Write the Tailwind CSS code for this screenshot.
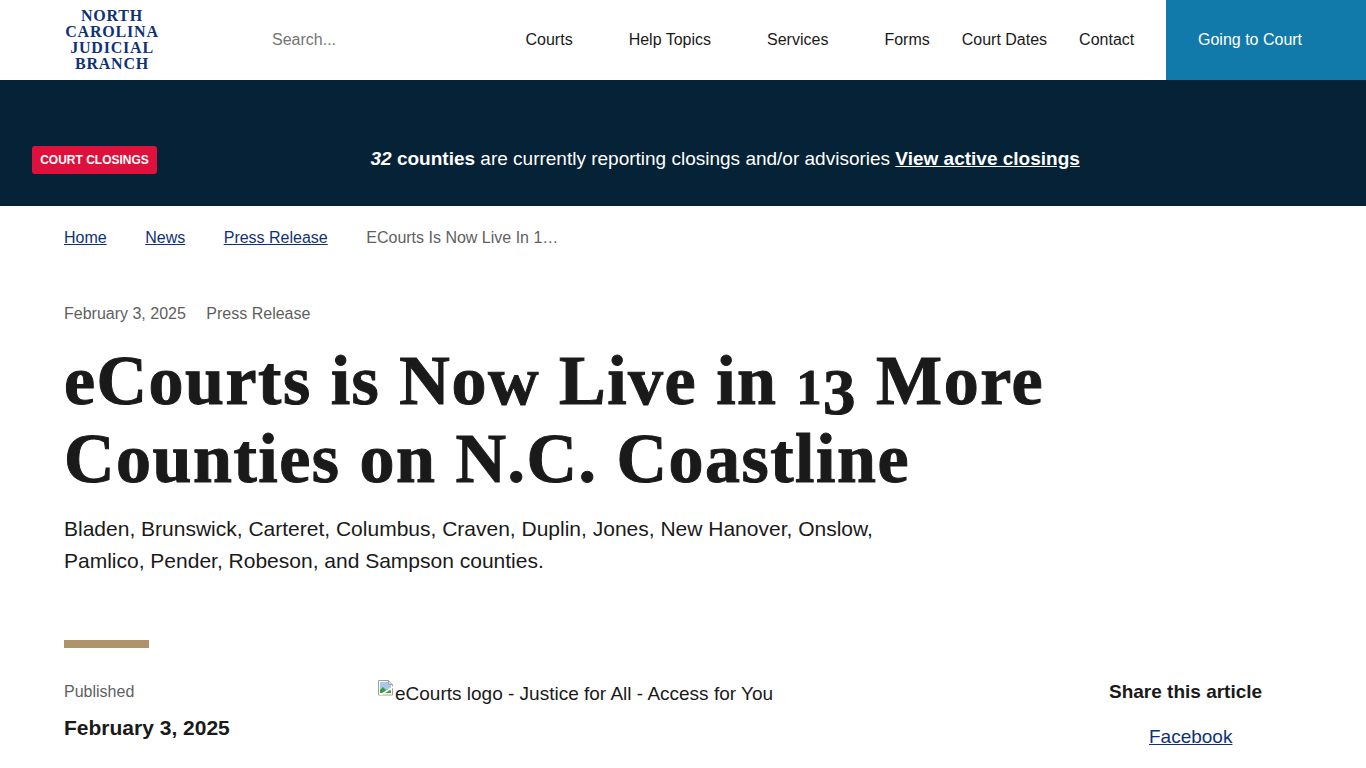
<!DOCTYPE html>
<html lang="en">
<head>
    <meta charset="UTF-8">
    <meta name="viewport" content="width=device-width, initial-scale=1.0">
    <title>eCourts is Now Live in 13 More Counties on N.C. Coastline</title>
    <script src="https://cdn.jsdelivr.net/npm/@tailwindcss/browser@4"></script>
</head>
<body class="bg-white font-['Liberation_Sans',Arial,sans-serif] text-[#1a1a1a] overflow-x-hidden">
    <!-- top nav -->
    <header class="flex h-20 items-stretch bg-white">
        <a href="#" class="w-[224px] pt-2 text-center font-['Liberation_Serif',serif] text-[16px] leading-[16px] font-bold tracking-[0.8px] text-[#0f3277]">
            <span class="block">NORTH</span>
            <span class="block">CAROLINA</span>
            <span class="block">JUDICIAL</span>
            <span class="block">BRANCH</span>
        </a>
        <div class="flex w-[222px] items-center pl-12 text-[16px] text-[#757575]">Search...</div>
        <nav class="ml-[63.5px] flex items-center text-[16px] text-[#1a1a1a]">
            <a href="#" class="pr-10 pl-4">Courts</a>
            <a href="#" class="pr-10 pl-4">Help Topics</a>
            <a href="#" class="pr-10 pl-4">Services</a>
            <a href="#" class="px-4">Forms</a>
            <a href="#" class="px-4">Court Dates</a>
            <a href="#" class="px-4">Contact</a>
        </nav>
        <a href="#" class="ml-auto flex w-[200px] items-center bg-[#1279ab] pl-8 text-[16px] text-white">Going to Court</a>
    </header>

    <!-- closings banner -->
    <div class="flex h-[126px] items-center bg-[#052236] pt-[34px] pl-8 text-white">
        <span class="flex h-7 w-[125px] items-center justify-center rounded-[3px] bg-[#e0103c] text-[12px] font-bold">COURT CLOSINGS</span>
        <p class="mb-[2px] ml-[213.5px] text-[19px]"><strong><em>32</em> counties</strong> are currently reporting closings and/or advisories <a href="#" class="font-bold underline">View active closings</a></p>
    </div>

    <main class="px-16">
        <!-- breadcrumb -->
        <nav class="flex h-[64px] items-center text-[16px]">
            <a href="#" class="text-[#0f3277] underline">Home</a>
            <a href="#" class="ml-[38.5px] text-[#0f3277] underline">News</a>
            <a href="#" class="ml-[38.5px] text-[#0f3277] underline">Press Release</a>
            <span class="ml-[38.5px] text-[#5f5f5f]">ECourts Is Now Live In 1…</span>
        </nav>

        <div class="mt-[32px] flex gap-[20.5px] text-[16px] leading-6 text-[#5f5f5f]">
            <span>February 3, 2025</span>
            <span>Press Release</span>
        </div>

        <h1 class="mt-[16px] font-['Liberation_Serif',serif] text-[70px] leading-[78px] font-bold tracking-[1.5px] text-[#1a1a1a] [-webkit-text-stroke:1px_#1a1a1a]">
            <span class="block">eCourts is Now Live in <span class="text-[50px] leading-[0]">1</span><span class="align-[-10px] text-[65px] leading-[0]">3</span> More</span>
            <span class="block">Counties on N.C. Coastline</span>
        </h1>

        <p class="mt-[15px] max-w-[860px] text-[21px] leading-8 text-[#1a1a1a]">Bladen, Brunswick, Carteret, Columbus, Craven, Duplin, Jones, New Hanover, Onslow, Pamlico, Pender, Robeson, and Sampson counties.</p>

        <div class="mt-[63px] h-2 w-[85px] bg-[#ae9468]"></div>

        <!-- article row -->
        <div class="mt-[32px] flex items-start">
            <div class="w-[314px]">
                <div class="text-[16px] leading-6 text-[#5f5f5f]">Published</div>
                <div class="mt-[10px] text-[21px] leading-7 font-bold">February 3, 2025</div>
            </div>
            <div class="flex w-[667px] items-start text-[19px] leading-7">
                <svg class="h-4 w-4 shrink-0" viewBox="0 0 16 16">
                    <path d="M.5.5h10l4 4v10.500H.5z" fill="#fff" stroke="#a0a0a0"/>
                    <path d="M10.500.5v4h4" fill="#e0e0e0" stroke="#a0a0a0"/>
                    <path d="M2 2h8v3h3v8H2z" fill="#a9c6ee"/>
                    <path d="M2 13V10l3-3 3 3 2-1 3 2v2z" fill="#3f9a3a"/>
                    <path d="M1 15L15 6v2L4 15z" fill="#fff"/>
                </svg>
                <span class="ml-px">eCourts logo - Justice for All - Access for You</span>
            </div>
            <div class="w-[257px]">
                <div class="ml-[64px] whitespace-nowrap text-[19px] leading-6 font-bold">Share this article</div>
                <a href="#" class="mt-[19px] ml-[104px] block text-[19px] leading-7 text-[#0f3277] underline">Facebook</a>
            </div>
        </div>
    </main>
</body>
</html>
